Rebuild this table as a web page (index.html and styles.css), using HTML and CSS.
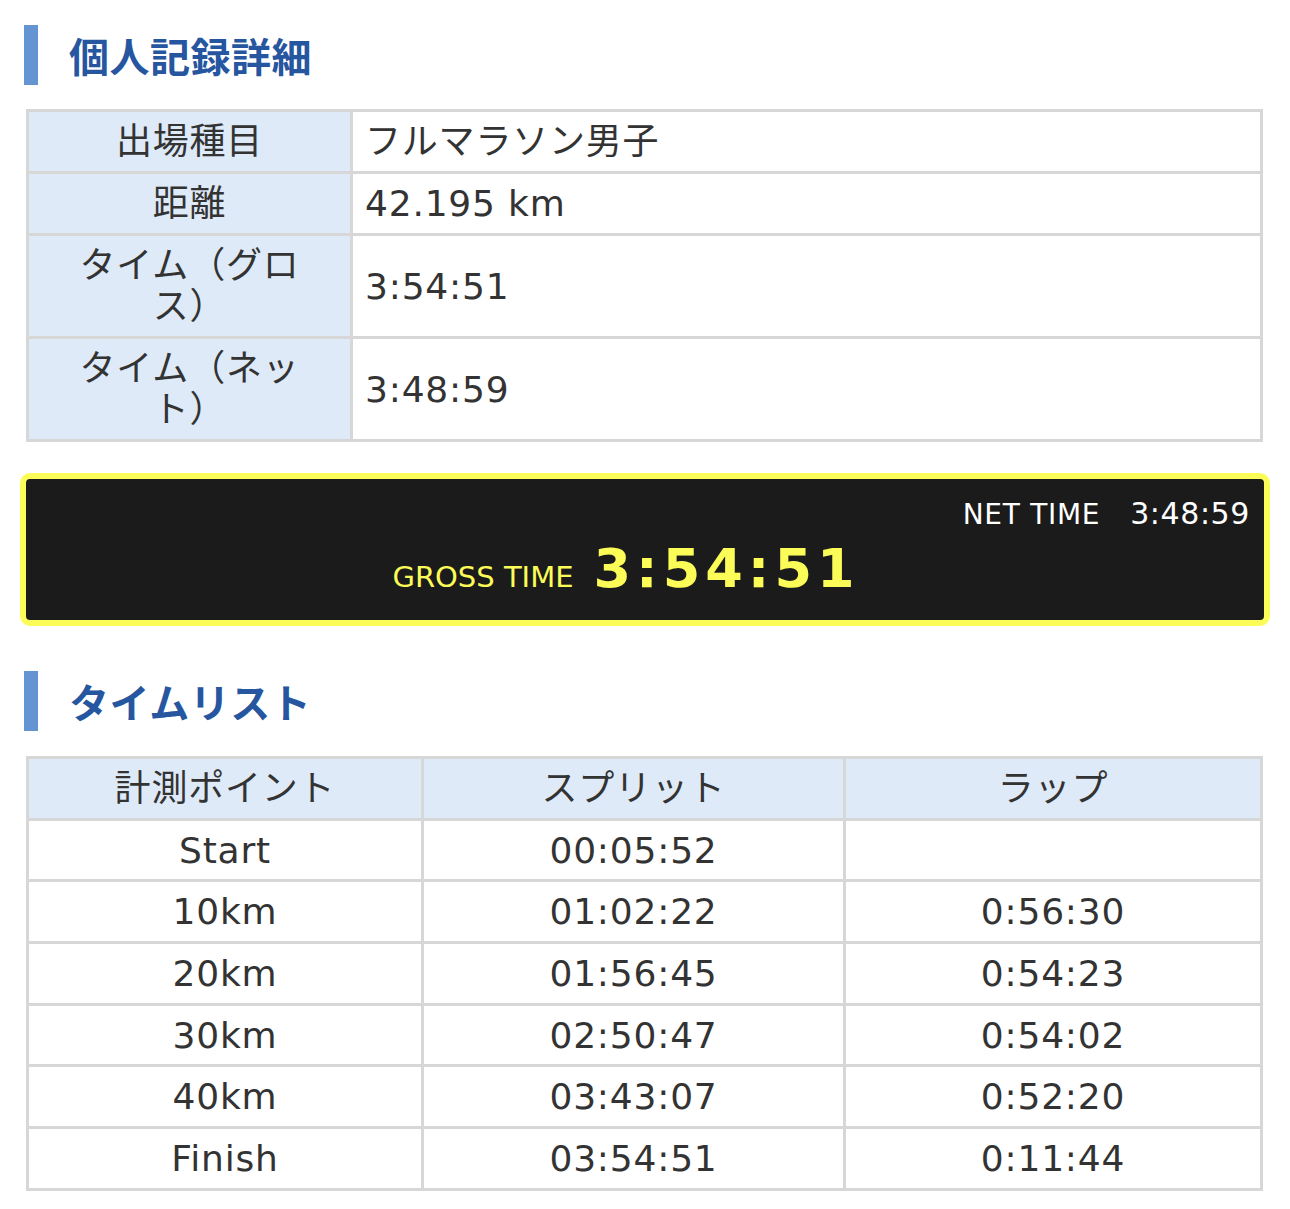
FILE: index.html
```html
<!DOCTYPE html>
<html lang="ja">
<head>
<meta charset="utf-8">
<title>個人記録詳細</title>
<link rel="stylesheet" href="styles.css">
</head>
<body>
<div class="page">
  <h2 class="heading heading-first">個人記録詳細</h2>
  <table class="info">
    <colgroup><col class="lc"><col></colgroup>
    <tr><th>出場種目</th><td>フルマラソン男子</td></tr>
    <tr><th>距離</th><td>42.195 km</td></tr>
    <tr><th>タイム（グロス）</th><td>3:54:51</td></tr>
    <tr><th>タイム（ネット）</th><td>3:48:59</td></tr>
  </table>

  <div class="board">
    <div class="net"><span class="net-label">NET TIME</span><span class="net-value">3:48:59</span></div>
    <div class="gross"><span class="gross-label">GROSS TIME</span><span class="gross-value">3:54:51</span></div>
  </div>

  <h2 class="heading heading-second">タイムリスト</h2>
  <table class="laps">
    <colgroup><col class="c1"><col class="c2"><col class="c3"></colgroup>
    <tr><th>計測ポイント</th><th>スプリット</th><th>ラップ</th></tr>
    <tr><td>Start</td><td>00:05:52</td><td></td></tr>
    <tr><td>10km</td><td>01:02:22</td><td>0:56:30</td></tr>
    <tr><td>20km</td><td>01:56:45</td><td>0:54:23</td></tr>
    <tr><td>30km</td><td>02:50:47</td><td>0:54:02</td></tr>
    <tr><td>40km</td><td>03:43:07</td><td>0:52:20</td></tr>
    <tr><td>Finish</td><td>03:54:51</td><td>0:11:44</td></tr>
  </table>
</div>
</body>
</html>
```

FILE: styles.css
```css
html, body {
  margin: 0;
  padding: 0;
  background: #ffffff;
}

body {
  font-family: "DejaVu Sans", "Noto Sans CJK JP", sans-serif;
  color: #333333;
}

.page {
  padding: 0 24px 18px 24px;
}

.heading {
  margin: 0;
  height: 60px;
  display: flex;
  align-items: center;
  border-left: 14px solid #6494d2;
  padding-left: 31px;
  font-family: "Noto Sans CJK JP", sans-serif;
  font-weight: 700;
  font-size: 40px;
  line-height: 60px;
  color: #2656a0;
  letter-spacing: 0.5px;
}

.heading-first {
  margin-top: 25px;
}

.heading-second {
  margin-top: 45px;
}

table {
  border-collapse: collapse;
  margin: 0 3px 0 2px;
  width: calc(100% - 5px);
  font-size: 36px;
  table-layout: fixed;
}

th, td {
  border: 3px solid #d7d7d7;
  font-weight: 400;
  line-height: 41px;
  letter-spacing: 0.8px;
}

th {
  background: #deeaf8;
}

.info {
  margin-top: 24px;
}

.info .lc {
  width: 324px;
}

.info th {
  padding: 9px 34px;
  text-align: center;
}

.info td {
  padding: 9px 12px;
  text-align: left;
  background: #ffffff;
}

.board {
  margin: 31px -4px 0 -4px;
  border: 6px solid #fcfc58;
  border-radius: 10px;
  background: #1b1b1b;
  padding: 15px 14px 23px 14px;
}

.net {
  display: flex;
  justify-content: flex-end;
  align-items: baseline;
  gap: 30px;
  color: #ffffff;
  font-size: 28px;
  line-height: 40px;
  height: 40px;
}

.net-label {
  letter-spacing: 0.7px;
}

.net-value {
  font-size: 30px;
  letter-spacing: 0.6px;
}

.gross {
  display: flex;
  justify-content: center;
  align-items: baseline;
  gap: 20px;
  color: #fcfc58;
  margin-top: 7px;
  padding-right: 38px;
  height: 56px;
}

.gross-label {
  font-size: 29px;
  line-height: 1;
}

.gross-value {
  font-size: 54px;
  line-height: 56px;
  font-weight: 700;
  letter-spacing: 5px;
}

.laps {
  margin-top: 25px;
}

.laps .c1 {
  width: 395px;
}

.laps .c2 {
  width: 422px;
}

.laps th, .laps td {
  padding: 9px 10px 8.7px 10px;
  text-align: center;
}
```
